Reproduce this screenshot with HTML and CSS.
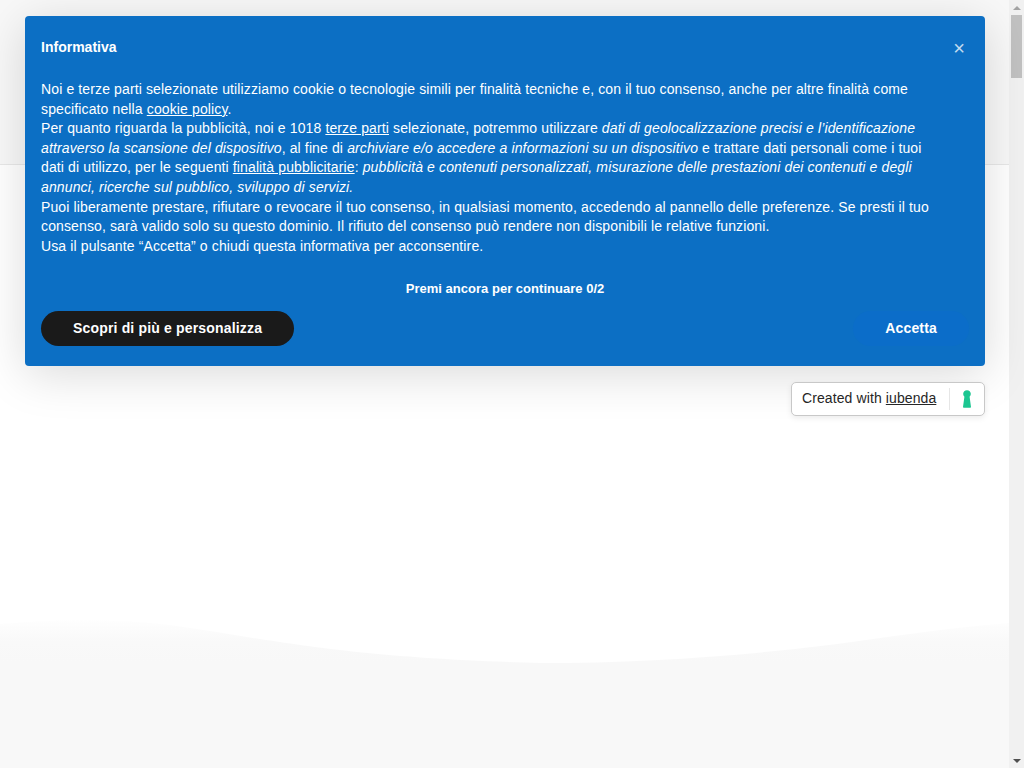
FILE: index.html
```html
<!DOCTYPE html>
<html lang="it">
<head>
<meta charset="utf-8">
<title>Informativa</title>
<link rel="stylesheet" href="styles.css">
</head>
<body>
<div class="page">
  <div class="content">
    <header class="topbar"></header>
    <main class="hero"></main>
    <svg class="wave" viewBox="0 0 1009 50" preserveAspectRatio="none" aria-hidden="true">
      <defs>
        <linearGradient id="waveShade" x1="0" y1="0" x2="0" y2="1">
          <stop offset="0" stop-color="#fefefe"/>
          <stop offset="0.5" stop-color="#f9f9f9"/>
          <stop offset="1" stop-color="#f8f8f8"/>
        </linearGradient>
      </defs>
      <path class="wave-fill" d="M0 11C50 7 110 5 170 12C270 26 340 45 540 50C660 50 780 40 880 25C930 18 970 13 1009 10V50H0Z"/>
    </svg>
    <div class="footer-band"></div>
  </div>
  <div class="scrollbar" aria-hidden="true">
    <span class="arrow arrow-up"></span>
    <span class="thumb"></span>
    <span class="track"></span>
    <span class="arrow arrow-down"></span>
  </div>
</div>

<div class="overlay">
  <section class="banner">
    <div class="banner-head">
      <h1 class="title">Informativa</h1>
      <button class="close" aria-label="Chiudi">×</button>
    </div>
    <div class="copy">
      Noi e terze parti selezionate utilizziamo cookie o tecnologie simili per finalità tecniche e, con il tuo consenso, anche per altre finalità come specificato nella <a href="#">cookie policy</a>.<br>
      Per quanto riguarda la pubblicità, noi e 1018 <a href="#">terze parti</a> selezionate, potremmo utilizzare <em>dati di geolocalizzazione precisi e l’identificazione attraverso la scansione del dispositivo</em>, al fine di <em>archiviare e/o accedere a informazioni su un dispositivo</em> e trattare dati personali come i tuoi dati di utilizzo, per le seguenti <a href="#">finalità pubblicitarie</a>: <em>pubblicità e contenuti personalizzati, misurazione delle prestazioni dei contenuti e degli annunci, ricerche sul pubblico, sviluppo di servizi.</em><br>
      Puoi liberamente prestare, rifiutare o revocare il tuo consenso, in qualsiasi momento, accedendo al pannello delle preferenze. Se presti il tuo consenso, sarà valido solo su questo dominio. Il rifiuto del consenso può rendere non disponibili le relative funzioni.<br>
      Usa il pulsante “Accetta” o chiudi questa informativa per acconsentire.
    </div>
    <p class="counter">Premi ancora per continuare 0/2</p>
    <div class="actions">
      <button class="btn btn-dark">Scopri di più e personalizza</button>
      <button class="btn btn-blue">Accetta</button>
    </div>
  </section>
  <div class="brand">
    <span class="brand-text">Created with <a href="#">iubenda</a></span>
    <span class="brand-divider"></span>
    <svg class="brand-icon" viewBox="0 0 10 18" aria-hidden="true">
      <path d="M5 0.2C7.2 0.2 8.8 1.8 8.8 3.8C8.8 5 8.3 6 7.6 6.7L9 17C9 17.5 8.7 17.8 8.2 17.8H1.8C1.3 17.8 1 17.5 1 17L2.4 6.7C1.7 6 1.2 5 1.2 3.8C1.2 1.8 2.8 0.2 5 0.2Z"/>
    </svg>
  </div>
</div>
</body>
</html>
```

FILE: styles.css
```css
* {
  box-sizing: border-box;
}

html,
body {
  margin: 0;
  height: 100%;
  overflow: hidden;
}

body {
  font-family: "Liberation Sans", Arial, sans-serif;
  background: #fff;
}

.page {
  display: flex;
  height: 768px;
}

.content {
  flex: 1;
  min-width: 0;
  display: flex;
  flex-direction: column;
}

.topbar {
  height: 165px;
  flex: none;
  background: #f8f8f8;
  border-bottom: 1px solid #e8e8e8;
}

.hero {
  height: 448px;
  flex: none;
  background: #fff;
}

.wave {
  display: block;
  width: 100%;
  height: 50px;
  flex: none;
}

.wave-fill {
  fill: url(#waveShade);
}

.footer-band {
  flex: 1;
  background: #f8f8f8;
}

.scrollbar {
  width: 15px;
  flex: none;
  display: flex;
  flex-direction: column;
  align-items: center;
  background: #f1f1f1;
}

.arrow {
  width: 15px;
  height: 15px;
  flex: none;
  display: flex;
  align-items: center;
  justify-content: center;
}

.arrow::before {
  content: "";
  border-left: 4px solid transparent;
  border-right: 4px solid transparent;
}

.arrow-up::before {
  border-bottom: 4px solid #a3a3a3;
}

.arrow-down::before {
  border-top: 4px solid #505050;
}

.thumb {
  width: 11px;
  height: 63px;
  flex: none;
  background: #c1c1c1;
}

.track {
  flex: 1;
}

.overlay {
  position: absolute;
  top: 16px;
  left: 25px;
  width: 960px;
  display: flex;
  flex-direction: column;
  align-items: flex-end;
  gap: 16px;
}

.banner {
  width: 100%;
  height: 350px;
  padding: 16px;
  background: #0c6fc4;
  color: #fff;
  border-radius: 4px;
  box-shadow: 0 8px 48px rgba(0, 0, 0, 0.15);
}

.banner-head {
  display: flex;
  justify-content: space-between;
  align-items: flex-start;
  height: 42px;
}

.title {
  margin: 0;
  padding-top: 6px;
  font-size: 14px;
  line-height: 18px;
  font-weight: 700;
  letter-spacing: 0.01px;
}

.close {
  width: 20px;
  height: 24px;
  margin-top: 4px;
  padding: 0;
  border: 0;
  background: none;
  color: #fff;
  opacity: 0.75;
  font: 20px/24px "Liberation Sans", Arial, sans-serif;
  cursor: pointer;
}

.copy {
  font-size: 14px;
  letter-spacing: 0.125px;
  line-height: 19.6px;
  margin-top: 6px;
  padding-right: 28px;
}

.copy a {
  color: #fff;
  text-decoration: underline;
}

.counter {
  margin: 24px 0 0;
  text-align: center;
  font-size: 13px;
  line-height: 18px;
  font-weight: 700;
  letter-spacing: 0.02px;
}

.actions {
  display: flex;
  justify-content: space-between;
  margin-top: 13px;
}

.btn {
  height: 35px;
  border: 0;
  border-radius: 64px;
  color: #fff;
  font: 700 14px/35px "Liberation Sans", Arial, sans-serif;
  letter-spacing: 0.17px;
  padding: 0 32px;
  cursor: pointer;
}

.btn-dark {
  background: #1a1a1a;
}

.btn-blue {
  background: #0b6dc9;
}

.brand {
  width: 194px;
  height: 34px;
  display: flex;
  align-items: center;
  padding: 0 12px 0 10px;
  background: #fff;
  border: 1px solid #c8c8c8;
  border-radius: 5px;
  box-shadow: 0 2px 6px rgba(0, 0, 0, 0.08);
  color: #262626;
  font-size: 14px;
  letter-spacing: 0.1px;
}

.brand-text {
  padding-bottom: 2px;
}

.brand-text a {
  color: #262626;
}

.brand-divider {
  width: 1px;
  height: 22px;
  margin-left: auto;
  margin-right: 12px;
  background: #e6e6e6;
}

.brand-icon {
  width: 10px;
  height: 18px;
  fill: #1cc691;
}
```
